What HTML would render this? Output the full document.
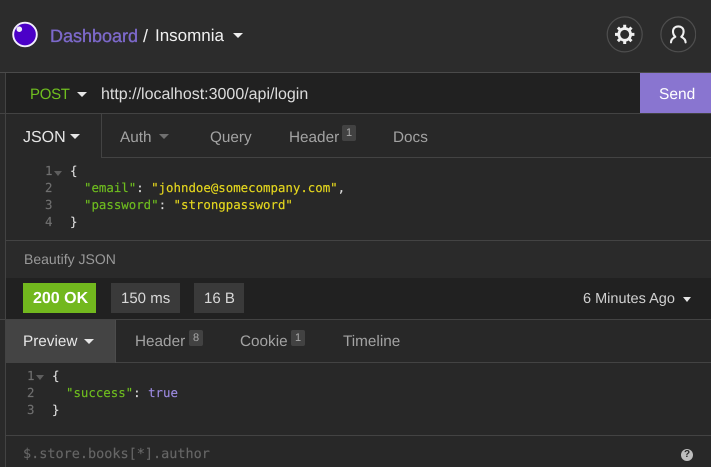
<!DOCTYPE html>
<html>
<head>
<meta charset="utf-8">
<style>
html,body{margin:0;padding:0;width:711px;height:467px;overflow:hidden;background:#2a2a2a;}
body{position:relative;font-family:"Liberation Sans",sans-serif;text-rendering:geometricPrecision;filter:blur(.3px);}
.a{position:absolute;white-space:pre;line-height:20px;}
.r{position:absolute;}
.m{font-family:"DejaVu Sans Mono","Liberation Mono",monospace;font-size:12.4px;line-height:17px;position:absolute;white-space:pre;text-rendering:geometricPrecision;-webkit-text-stroke:.15px currentColor;}
.tab{font-size:15.3px;color:#a3a3a3;}
.badge{position:absolute;width:14px;height:16px;background:#424242;border-radius:2px;color:#a8a8a8;font-size:11px;line-height:16px;text-align:center;}
.ar{position:absolute;width:0;height:0;border-left:5px solid transparent;border-right:5px solid transparent;border-top:5px solid #e6e6e6;}
.g{color:#6fbe1f}.y{color:#e6d81e}.w{color:#dcdcdc}.n{color:#707070}.p{color:#9c8ae0}
</style>
</head>
<body>
<div class="r" style="left:0;top:0;width:711px;height:72px;background:#2c2c2c"></div>
<svg class="r" style="left:11px;top:20px" width="28" height="28" viewBox="0 0 28 28">
<circle cx="14" cy="14.5" r="11.8" fill="#4b00c8" stroke="#f2eefc" stroke-width="1.9"/>
<circle cx="8.3" cy="9.2" r="2.8" fill="#f2eefc"/>
</svg>
<div class="a" style="left:50px;top:26px;font-size:18px;color:#7d69cb;-webkit-text-stroke:.35px #7d69cb">Dashboard</div>
<div class="a" style="left:143px;top:26px;font-size:18px;color:#f0f0f0">/</div>
<div class="a" style="left:155px;top:26px;font-size:17px;color:#f0f0f0">Insomnia</div>
<div class="ar" style="left:233px;top:33px;border-top:5px solid #efefef"></div>

<svg class="r" style="left:606px;top:16px" width="37" height="37" viewBox="0 0 37 37">
<circle cx="18.7" cy="18.4" r="17.5" fill="none" stroke="#4e4e4e" stroke-width="1.2"/>
<g stroke="#f0f0f0" stroke-width="3" stroke-linecap="butt">
<path d="M18.7 8.8v19.2M9 18.4h19.4M11.9 11.6l13.6 13.6M25.5 11.6L11.9 25.2"/>
</g>
<circle cx="18.7" cy="18.4" r="5.9" fill="#2c2c2c" stroke="#f0f0f0" stroke-width="2.8"/>
</svg>
<svg class="r" style="left:660px;top:16px" width="36" height="37" viewBox="0 0 36 37">
<circle cx="18.3" cy="18.4" r="17.4" fill="none" stroke="#4e4e4e" stroke-width="1.2"/>
<path d="M11 26.4c0-2.8 1.8-4.3 4.3-5.6-1.5-1.4-2.3-3.3-2.3-5.3 0-3.1 2.2-5.1 5.3-5.1s5.3 2 5.3 5.1c0 2-.8 3.9-2.3 5.3 2.5 1.3 4.3 2.8 4.3 5.6" fill="none" stroke="#f0f0f0" stroke-width="2.1" stroke-linecap="round" stroke-linejoin="round"/>
</svg>

<!-- left strip -->
<div class="r" style="left:0;top:72px;width:5px;height:395px;background:#2a2a2a"></div>
<div class="r" style="left:5px;top:72px;width:1px;height:395px;background:#434343"></div>

<!-- URL bar -->
<div class="r" style="left:0;top:72px;width:711px;height:1px;background:#4a4a4a"></div>
<div class="r" style="left:6px;top:73px;width:705px;height:40px;background:#212121"></div>
<div class="r" style="left:0;top:113px;width:711px;height:1px;background:#434343"></div>
<div class="a" style="left:30px;top:85px;font-size:15px;letter-spacing:-.3px;color:#6fbe1f">POST</div>
<div class="ar" style="left:77px;top:92px"></div>
<div class="a" style="left:101px;top:85px;font-size:16px;color:#dcdcdc">http://localhost:3000/api/login</div>
<div class="r" style="left:640px;top:73px;width:71px;height:40px;background:#8975d0"></div>
<div class="a" style="left:659px;top:85px;font-size:15.5px;color:#fff">Send</div>

<!-- request tabs -->
<div class="r" style="left:6px;top:114px;width:705px;height:126px;background:#282828"></div>
<div class="r" style="left:101px;top:114px;width:1px;height:44px;background:#434343"></div>
<div class="r" style="left:102px;top:157px;width:609px;height:1px;background:#434343"></div>
<div class="a" style="left:23px;top:128px;font-size:16px;color:#e6e6e6">JSON</div>
<div class="ar" style="left:70px;top:134px"></div>
<div class="a tab" style="left:120px;top:128px">Auth</div>
<div class="ar" style="left:159px;top:134px;border-top-color:#707070"></div>
<div class="a tab" style="left:210px;top:128px">Query</div>
<div class="a tab" style="left:289px;top:128px">Header</div>
<div class="badge" style="left:342px;top:125px">1</div>
<div class="a tab" style="left:393px;top:128px">Docs</div>

<!-- request editor -->
<div class="m n" style="left:45px;top:162px">1</div>
<div class="m n" style="left:45px;top:179px">2</div>
<div class="m n" style="left:45px;top:196px">3</div>
<div class="m n" style="left:45px;top:213px">4</div>
<div class="ar" style="left:54px;top:171px;border-left-width:4px;border-right-width:4px;border-top:5px solid #5e5e5e"></div>
<div class="m w" style="left:70px;top:162px">{</div>
<div class="m w" style="left:84px;top:179px"><span class="g">"email"</span>: <span class="y">"johndoe@somecompany.com"</span>,</div>
<div class="m w" style="left:84px;top:196px"><span class="g">"password"</span>: <span class="y">"strongpassword"</span></div>
<div class="m w" style="left:70px;top:213px">}</div>

<!-- beautify -->
<div class="r" style="left:6px;top:240px;width:705px;height:1px;background:#434343"></div>
<div class="a" style="left:24px;top:249px;font-size:14px;color:#999">Beautify JSON</div>

<!-- response bar -->
<div class="r" style="left:6px;top:278px;width:705px;height:41px;background:#212121"></div>
<div class="r" style="left:0;top:319px;width:711px;height:1px;background:#434343"></div>
<div class="r" style="left:23px;top:283px;width:73px;height:30px;background:#72b81e"></div>
<div class="a" style="left:33px;top:289px;font-size:16px;font-weight:bold;color:#fff">200 OK</div>
<div class="r" style="left:111px;top:283px;width:69px;height:30px;background:#3a3a3a"></div>
<div class="a" style="left:121px;top:289px;font-size:15px;color:#d8d8d8">150 ms</div>
<div class="r" style="left:194px;top:283px;width:50px;height:30px;background:#3a3a3a"></div>
<div class="a" style="left:204px;top:289px;font-size:15px;color:#d8d8d8">16 B</div>
<div class="a" style="left:583px;top:289px;font-size:14.5px;color:#d0d0d0">6 Minutes Ago</div>
<div class="ar" style="left:683px;top:297px;border-left-width:4.5px;border-right-width:4.5px"></div>

<!-- response tabs -->
<div class="r" style="left:6px;top:320px;width:705px;height:147px;background:#282828"></div>
<div class="r" style="left:6px;top:320px;width:109px;height:43px;background:#444"></div>
<div class="r" style="left:115px;top:320px;width:1px;height:43px;background:#4c4c4c"></div>
<div class="r" style="left:116px;top:362px;width:595px;height:1px;background:#434343"></div>
<div class="a" style="left:23px;top:332px;font-size:15.3px;color:#e6e6e6">Preview</div>
<div class="ar" style="left:84px;top:339px"></div>
<div class="a tab" style="left:135px;top:332px">Header</div>
<div class="badge" style="left:189px;top:330px">8</div>
<div class="a tab" style="left:240px;top:332px">Cookie</div>
<div class="badge" style="left:291px;top:330px">1</div>
<div class="a tab" style="left:343px;top:332px">Timeline</div>

<!-- response editor -->
<div class="m n" style="left:27px;top:367px">1</div>
<div class="m n" style="left:27px;top:384px">2</div>
<div class="m n" style="left:27px;top:401px">3</div>
<div class="ar" style="left:36px;top:375px;border-left-width:4px;border-right-width:4px;border-top:5px solid #5e5e5e"></div>
<div class="m w" style="left:52px;top:367px">{</div>
<div class="m w" style="left:66px;top:384px"><span class="g">"success"</span>: <span class="p">true</span></div>
<div class="m w" style="left:52px;top:401px">}</div>

<!-- filter -->
<div class="r" style="left:6px;top:435px;width:705px;height:1px;background:#434343"></div>
<div class="m" style="left:23px;top:446px;color:#666;font-size:13.5px">$.store.books[*].author</div>
<div class="r" style="left:681px;top:449px;width:12px;height:12px;border-radius:50%;background:#bdbdbd;color:#282828;font-size:10px;font-weight:bold;line-height:12px;text-align:center">?</div>
</body>
</html>
